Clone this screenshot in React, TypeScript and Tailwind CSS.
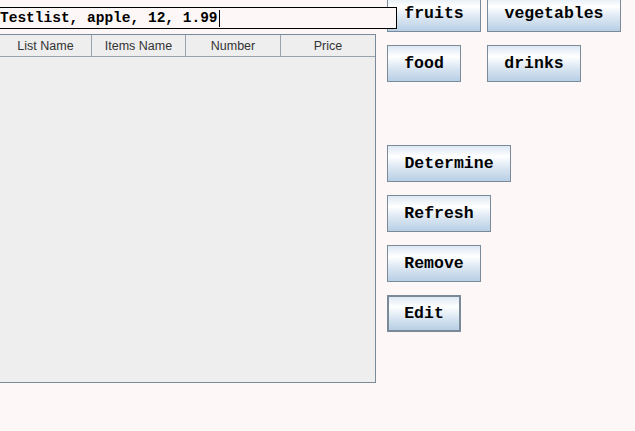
import React from "react";

const btn =
  "h-[37px] border border-[#7a8a99] bg-[linear-gradient(to_bottom,#dde8f3_0%,#ffffff_30%,#dde8f3_60%,#b8cfe5_100%)] flex items-center justify-center text-[16.5px] font-bold text-black font-['Liberation_Mono',monospace] leading-none pt-[1px]";

function Btn({ label, w, focused }: { label: string; w: string; focused?: boolean }) {
  return (
    <div className={`${btn} ${w} ${focused ? "border-2" : ""}`}>{label}</div>
  );
}

export default function App() {
  const headers = [
    { h: "List Name", w: "w-[92px] border-r border-r-[#9aa3ab]" },
    { h: "Items Name", w: "w-[94px] border-r border-r-[#9aa3ab]" },
    { h: "Number", w: "w-[95px] border-r border-r-[#9aa3ab]" },
    { h: "Price", w: "flex-1" },
  ];
  return (
    <div className="w-[635px] h-[431px] bg-[#fdf8f7] flex overflow-hidden">
      <div className="w-[377px] ml-[-1px] pt-[7px] flex flex-col shrink-0">
        <div className="relative z-10 w-[398px] h-[22px] border border-black flex items-center bg-[#fdf8f7]">
          <span className="whitespace-pre text-[14.5px] font-bold text-black font-['Liberation_Mono',monospace] leading-none">
            Testlist, apple, 12, 1.99
          </span>
          <span className="w-px h-[17px] bg-black ml-[1px]" />
        </div>
        <div className="mt-[5px] w-[377px] h-[349px] border border-[#7a8a99] bg-[#eeeeee] flex flex-col">
          <div className="flex h-[22px] border-b border-[#9aa3ab]">
            {headers.map(({ h, w }) => (
              <div
                key={h}
                className={`${w} flex items-center justify-center pt-[1px] text-[12.5px] text-[#333333] font-['Liberation_Sans',Arial,sans-serif]`}
              >
                {h}
              </div>
            ))}
          </div>
          <div className="flex-1" />
        </div>
      </div>
      <div className="ml-[11px] mt-[-5px] flex flex-col gap-[13px]">
        <div className="flex gap-[6px]">
          <Btn label="fruits" w="w-[94px]" />
          <Btn label="vegetables" w="w-[134px]" />
        </div>
        <div className="flex gap-[26px]">
          <Btn label="food" w="w-[74px]" />
          <Btn label="drinks" w="w-[94px]" />
        </div>
        <div className="h-[37px]" />
        <Btn label="Determine" w="w-[124px]" />
        <Btn label="Refresh" w="w-[104px]" />
        <Btn label="Remove" w="w-[94px]" />
        <Btn label="Edit" w="w-[74px]" focused />
      </div>
    </div>
  );
}
